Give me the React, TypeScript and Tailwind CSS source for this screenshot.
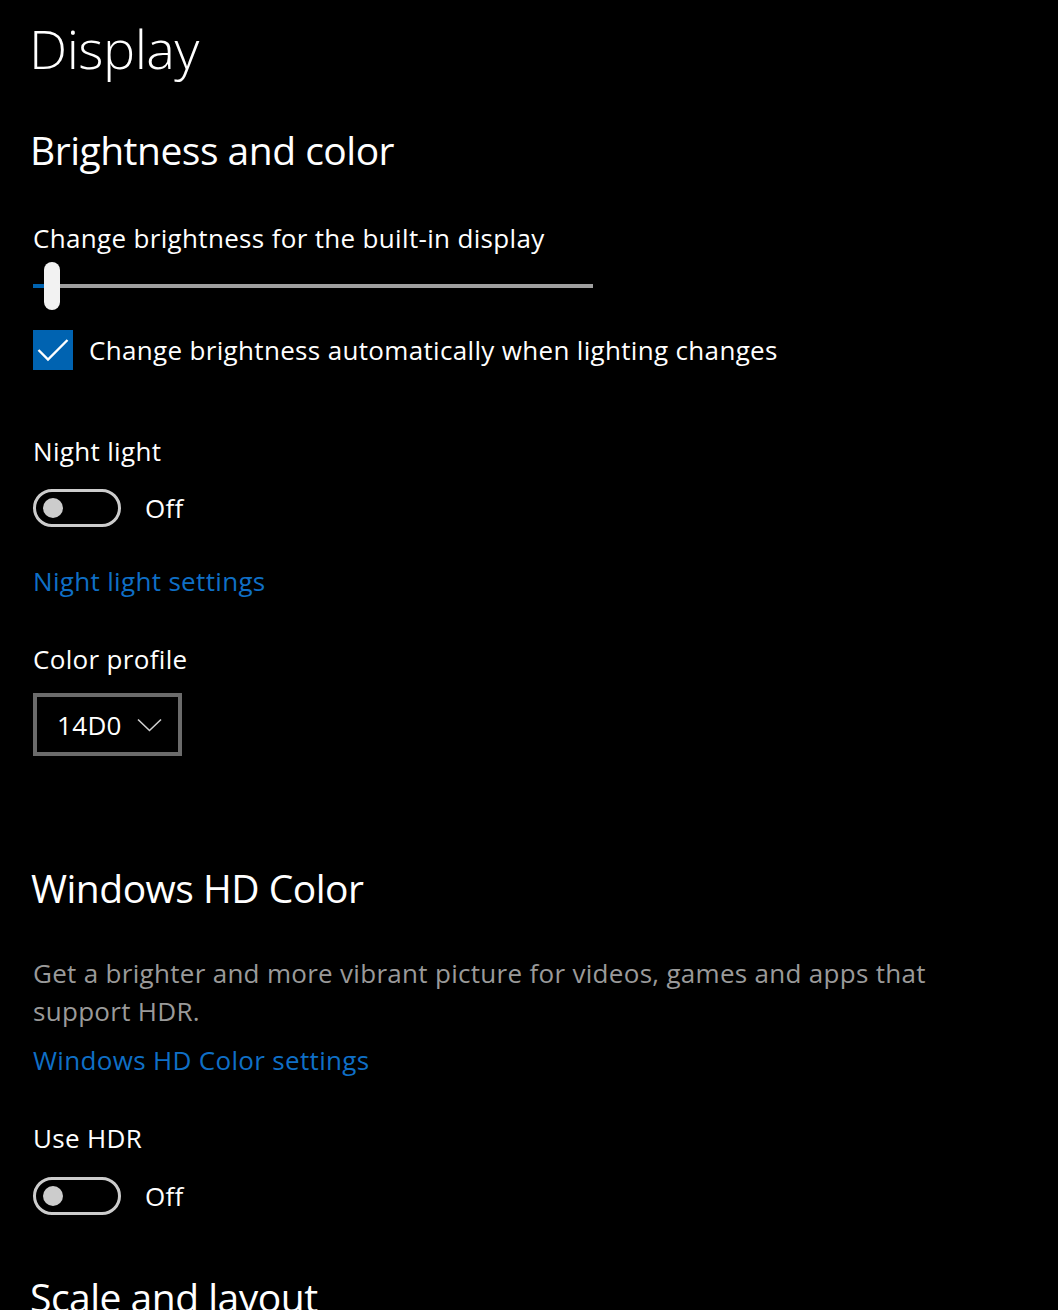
import React from "react";

function Toggle() {
  return (
    <div className="flex items-center h-[38px]">
      <div className="w-[88px] h-[38px] rounded-full border-[3px] border-[#cccccc] flex items-center pl-[7px] box-border">
        <div className="w-[20px] h-[20px] rounded-full bg-[#cccccc]" />
      </div>
      <span className="ml-[24px] text-[26px] leading-[38px] tracking-[0.3px] text-white">Off</span>
    </div>
  );
}

export default function App() {
  return (
    <div
      className="min-h-[1310px] w-[1058px] bg-black text-white overflow-hidden"
      style={{ fontFamily: '"Open Sans", "Noto Sans", sans-serif' }}
    >
      <div className="pl-[33px] pt-[17px] flex flex-col items-start">
        <h1 className="-ml-[4px] text-[54px] leading-[62px] font-light tracking-[-0.5px]">Display</h1>

        <h2 className="-ml-[3px] mt-[46px] text-[39px] leading-[50px] font-normal tracking-[-0.5px]">Brightness and color</h2>

        <div className="mt-[44px] text-[26px] leading-[38px] tracking-[0.33px]">Change brightness for the built-in display</div>

        <div className="mt-[5px] relative w-[560px] h-[48px] flex items-center">
          <div className="h-[4px] w-full bg-[#9f9f9f] flex">
            <div className="w-[12px] h-full bg-[#0063b1]" />
          </div>
          <div className="absolute left-[11px] top-0 w-[16px] h-[48px] rounded-full bg-[#f2f2f2]" />
        </div>

        <div className="mt-[20px] flex items-center h-[40px]">
          <div className="w-[40px] h-[40px] bg-[#0063b1] flex items-center justify-center">
            <svg width="40" height="40" viewBox="0 0 40 40" fill="none">
              <path d="M5.5 20 L15 29.5 L34.5 10" stroke="white" strokeWidth="2.4" />
            </svg>
          </div>
          <span className="ml-[16px] text-[26px] leading-[38px] tracking-[0.33px]">Change brightness automatically when lighting changes</span>
        </div>

        <div className="mt-[62px] text-[26px] leading-[38px] tracking-[0.33px]">Night light</div>
        <div className="mt-[19px]">
          <Toggle />
        </div>

        <a className="mt-[35px] text-[26px] leading-[38px] tracking-[0.33px] text-[#0f6fc6]">Night light settings</a>

        <div className="mt-[40px] text-[26px] leading-[38px] tracking-[0.33px]">Color profile</div>
        <div className="mt-[15px] w-[149px] h-[63px] border-[4px] border-[#6b6b6b] flex items-center pl-[20px] pr-[16px] box-border">
          <span className="text-[26px] leading-[38px] tracking-[0.33px]">14D0</span>
          <svg className="ml-auto" width="25" height="14" viewBox="0 0 25 14" fill="none">
            <path d="M1 1.5 L12.5 12.5 L24 1.5" stroke="#d0d0d0" strokeWidth="1.6" />
          </svg>
        </div>

        <h2 className="-ml-[2px] mt-[107px] text-[39px] leading-[50px] font-normal tracking-[-0.5px]">Windows HD Color</h2>

        <p className="mt-[41px] max-w-[910px] text-[26px] leading-[38px] tracking-[0.3px] text-[#9a9a9a]">
          Get a brighter and more vibrant picture for videos, games and apps that support HDR.
        </p>
        <a className="mt-[11px] text-[26px] leading-[38px] tracking-[0.33px] text-[#0f6fc6]">Windows HD Color settings</a>

        <div className="mt-[40px] text-[26px] leading-[38px] tracking-[0.33px]">Use HDR</div>
        <div className="mt-[20px]">
          <Toggle />
        </div>

        <h2 className="-ml-[3px] mt-[57px] text-[39px] leading-[50px] font-normal tracking-[-0.5px]">Scale and layout</h2>
      </div>
    </div>
  );
}
